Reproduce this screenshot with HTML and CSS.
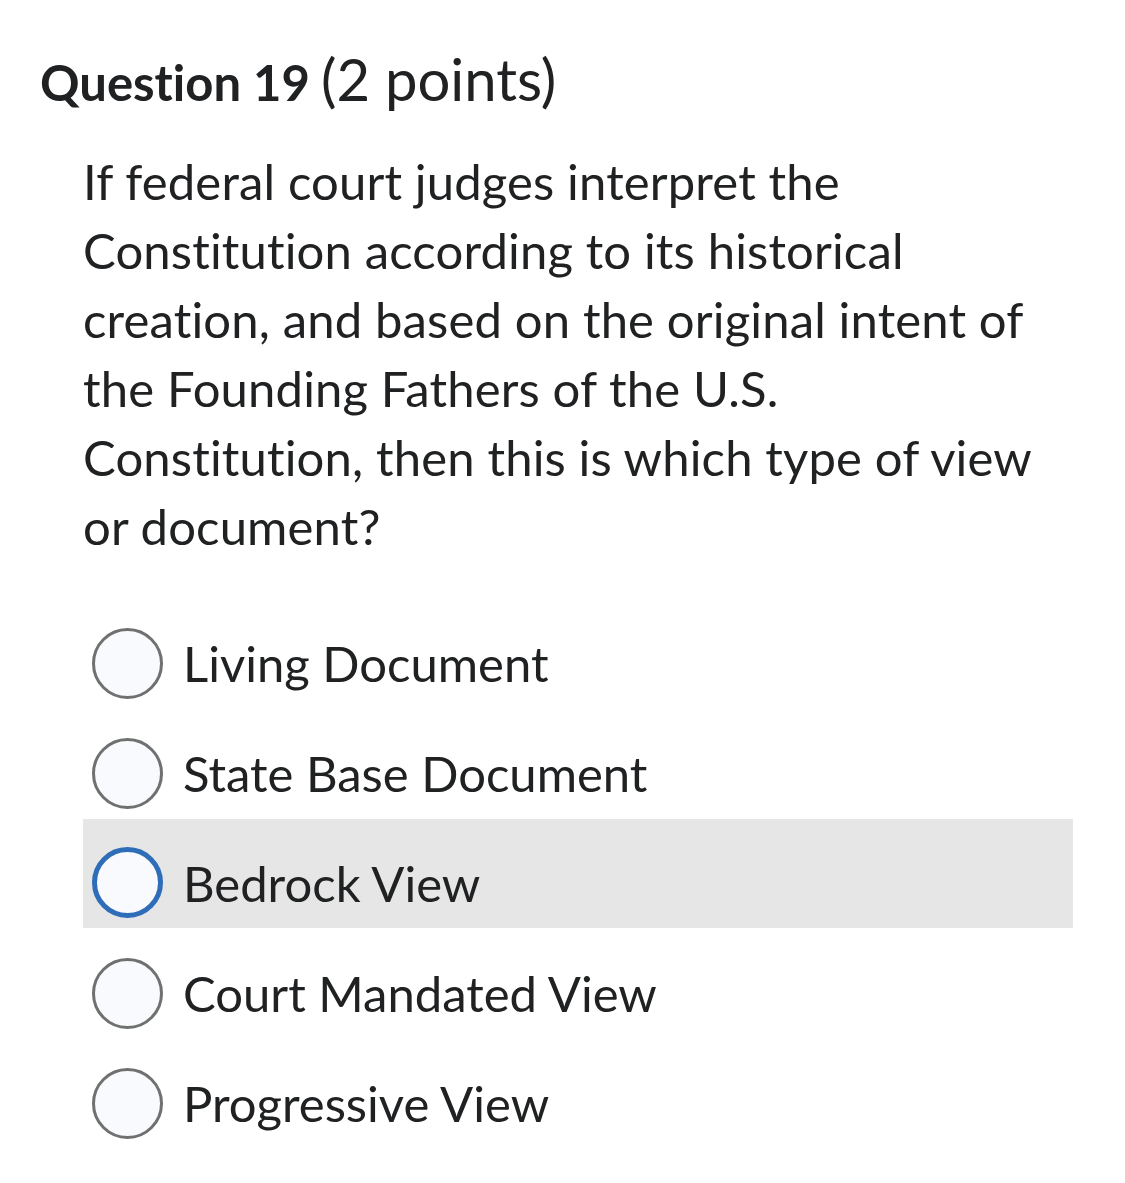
FILE: index.html
```
<!DOCTYPE html>
<html>
<head>
<meta charset="utf-8">
<link rel="stylesheet" href="styles.css">
</head>
<body>
<div class="page">
  <h2 class="q-title"><span class="q-num">Question 19</span> <span class="q-pts">(2 points)</span></h2>
  <div class="q-body">
    <p class="q-text">If federal court judges interpret the Constitution according to its historical creation, and based on the original intent of the Founding Fathers of the U.S. Constitution, then this is which type of view or document?</p>
    <div class="options">
      <div class="opt"><span class="radio"></span><span class="label">Living Document</span></div>
      <div class="opt"><span class="radio"></span><span class="label">State Base Document</span></div>
      <div class="opt hover"><span class="radio focus"></span><span class="label">Bedrock View</span></div>
      <div class="opt"><span class="radio"></span><span class="label">Court Mandated View</span></div>
      <div class="opt"><span class="radio"></span><span class="label">Progressive View</span></div>
    </div>
  </div>
</div>
</body>
</html>
```
FILE: styles.css
```
html, body {
  margin: 0;
  padding: 0;
  background: #ffffff;
}
body {
  font-family: Lato, "Noto Sans", sans-serif;
  color: #202122;
  font-variant-ligatures: none;
}
.page {
  padding: 44px 0 0 40px;
}
.q-title {
  margin: 0;
  font-weight: normal;
  line-height: 70px;
}
.q-num {
  font-weight: bold;
  font-size: 49px;
}
.q-pts {
  font-size: 58px;
  margin-left: 5px;
}
.q-body {
  padding-left: 43px;
  width: 990px;
}
.q-text {
  margin: 20px 0 0 0;
  font-size: 49px;
  line-height: 69px;
  letter-spacing: 0.15px;
  width: 960px;
}
.options {
  margin-top: 38px;
  display: flex;
  flex-direction: column;
}
.opt {
  box-sizing: border-box;
  display: flex;
  align-items: center;
  height: 110px;
  padding: 18px 0 0 9px;
  gap: 20px;
  font-size: 49px;
}
.opt.hover {
  background: #e6e6e6;
  height: 109px;
  margin-bottom: 1px;
}
.radio {
  box-sizing: border-box;
  width: 71px;
  height: 71px;
  border-radius: 50%;
  border: 3px solid #6f7070;
  background: #f9fafd;
  flex: none;
}
.radio.focus {
  border: 5px solid #2e6db7;
}
```
